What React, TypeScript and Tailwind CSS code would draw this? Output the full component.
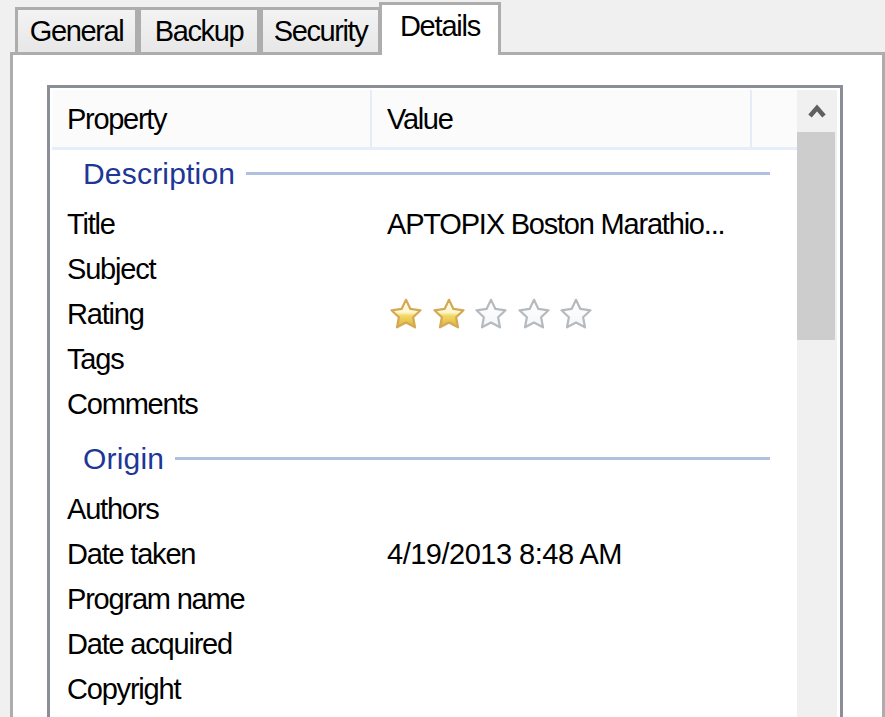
import React from "react";

const FONT = { fontFamily: '"Liberation Sans", Arial, sans-serif' };

function Star({ filled, id }: { filled: boolean; id: string }) {
  return (
    <svg width="32" height="32" viewBox="0 0 32 32" className="block">
      <defs>
        <linearGradient id={id} x1="0" y1="0" x2="0" y2="1">
          {filled ? (
            <>
              <stop offset="0" stopColor="#fffdf2" />
              <stop offset="0.45" stopColor="#fff6d0" />
              <stop offset="0.58" stopColor="#f3d865" />
              <stop offset="1" stopColor="#dcb23a" />
            </>
          ) : (
            <>
              <stop offset="0" stopColor="#ffffff" />
              <stop offset="1" stopColor="#f4f6f8" />
            </>
          )}
        </linearGradient>
      </defs>
      <path
        d="M16 1.8 L20.41 10.93 L30.5 12.3 L23.13 19.32 L25 29.3 L16 24.5 L7 29.3 L8.87 19.32 L1.5 12.3 L11.59 10.93 Z"
        fill={`url(#${id})`}
        stroke={filled ? "#d4a955" : "#b5babf"}
        strokeWidth="2.2"
        strokeLinejoin="round"
      />
    </svg>
  );
}

function Tab({ label, selected, w }: { label: string; selected?: boolean; w: string }) {
  if (selected) {
    return (
      <div
        className={`relative z-10 -ml-[2px] h-[53px] ${w} border-[3px] border-b-0 border-[#adadad] bg-white text-center text-[29px] leading-[42px] tracking-[-1.2px] text-black`}
      >
        {label}
      </div>
    );
  }
  return (
    <div
      className={`mt-[5px] h-[45px] ${w} border-[3px] border-b-0 border-[#adadad] bg-gradient-to-b from-[#f3f3f3] to-[#e7e7e7] text-center text-[29px] leading-[43px] tracking-[-1.4px] text-black`}
    >
      {label}
    </div>
  );
}

function GroupRow({ label, first }: { label: string; first?: boolean }) {
  return (
    <div className={first ? "h-[50px]" : "mt-[10px] h-[50px]"}>
      <div className="flex h-[45px] items-center pl-[31px]">
        <span className="text-[30px] leading-[47px] tracking-[0.2px] text-[#1e3796]">{label}</span>
        <div className="ml-[11px] mr-[27px] h-[3px] flex-1 bg-[#b1c0df]" />
      </div>
    </div>
  );
}

function DataRow({ label, children }: { label: string; children?: React.ReactNode }) {
  return (
    <div className="flex h-[45px] items-start text-[29px] leading-[47px] tracking-[-1.2px] text-black">
      <div className="w-[320px] shrink-0 pl-[15px] whitespace-nowrap">{label}</div>
      <div className="flex-1 pl-[15px] whitespace-nowrap">{children}</div>
    </div>
  );
}

export default function App() {
  return (
    <div className="flex h-[717px] w-[885px] flex-col overflow-hidden bg-[#f0f0f0]" style={FONT}>
      <div className="flex h-[52px] shrink-0 items-start pl-[15px] pt-[2px]">
        <Tab label="General" w="w-[123px]" />
        <Tab label="Backup" w="w-[122px]" />
        <Tab label="Security" w="w-[121px]" />
        <Tab label="Details" selected w="w-[122px]" />
      </div>
      <div className="ml-[10px] h-[700px] w-[875px] shrink-0 border-[3px] border-[#adadad] bg-white pl-[34px] pr-[39px] pt-[30px]">
        <div className="flex h-[700px] border-[3px] border-[#8a8e96] bg-white p-[2px]">
          <div className="flex w-[745px] shrink-0 flex-col">
            <div className="flex h-[57px] bg-[#fbfbfb] text-[29px] leading-[59px] tracking-[-1.3px] text-black">
              <div className="w-[318px] pl-[15px]">Property</div>
              <div className="w-[2px] bg-[#e4ecf7]" />
              <div className="w-[378px] pl-[15px]">Value</div>
              <div className="w-[2px] bg-[#e4ecf7]" />
              <div className="flex-1" />
            </div>
            <div className="h-[3px] bg-[#e6eef9]" />
            <div className="pt-[1px]">
              <GroupRow label="Description" first />
              <DataRow label="Title">APTOPIX Boston Marathio...</DataRow>
              <DataRow label="Subject" />
              <DataRow label="Rating">
                <div className="flex h-[45px] items-center gap-[10.5px] pl-[3px]">
                  <Star filled id="s1" />
                  <Star filled id="s2" />
                  <Star filled={false} id="s3" />
                  <Star filled={false} id="s4" />
                  <Star filled={false} id="s5" />
                </div>
              </DataRow>
              <DataRow label="Tags" />
              <DataRow label="Comments" />
              <GroupRow label="Origin" />
              <DataRow label="Authors" />
              <DataRow label="Date taken">
                <span className="tracking-[-0.5px]">4/19/2013 8:48 AM</span>
              </DataRow>
              <DataRow label="Program name" />
              <DataRow label="Date acquired" />
              <DataRow label="Copyright" />
            </div>
          </div>
          <div className="mr-[1px] flex w-[40px] shrink-0 flex-col bg-[#f0f0f0]">
            <div className="flex h-[42px] items-center justify-center">
              <svg width="20" height="16" viewBox="0 0 20 16" className="block">
                <path d="M3 13 L10 5 L17 13" fill="none" stroke="#606060" strokeWidth="4.5" strokeLinejoin="miter" />
              </svg>
            </div>
            <div className="mr-[2px] h-[208px] bg-[#cdcdcd]" />
          </div>
        </div>
      </div>
    </div>
  );
}
